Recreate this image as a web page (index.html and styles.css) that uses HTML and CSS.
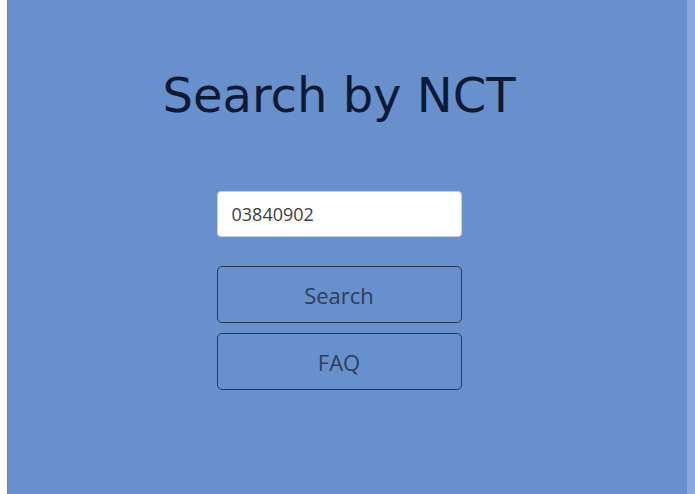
FILE: index.html
```html
<!DOCTYPE html>
<html>
<head>
<meta charset="utf-8">
<link rel="stylesheet" href="styles.css">
</head>
<body>
<div class="page">
  <main class="content">
    <h1 class="title">Search by NCT</h1>
    <form class="form">
      <input class="field" type="text" value="03840902">
      <button class="btn" type="button">Search</button>
      <button class="btn" type="button">FAQ</button>
    </form>
  </main>
  <div class="edge"></div>
</div>
</body>
</html>
```
FILE: styles.css
```css
html, body {
  margin: 0;
  padding: 0;
  background: #ffffff;
}
.page {
  display: flex;
  height: 494px;
  padding-left: 7px;
}
.content {
  width: 680px;
  background: #6890cd;
  display: flex;
  flex-direction: column;
  align-items: center;
  padding-right: 16px;
  box-sizing: border-box;
}
.edge {
  width: 8px;
  background: #8aa8dc;
}
.title {
  margin: 63px 0 0 0;
  font-family: "DejaVu Sans", sans-serif;
  font-weight: normal;
  font-size: 48px;
  line-height: 64px;
  color: #0e1a33;
  letter-spacing: 0px;
}
.form {
  margin-top: 64px;
  display: flex;
  flex-direction: column;
  width: 245px;
}
.field {
  height: 46px;
  box-sizing: border-box;
  border: 1px solid #c9ced6;
  border-radius: 4px;
  background: #ffffff;
  padding: 0 14px;
  font-family: "Open Sans", sans-serif;
  font-size: 18px;
  color: #3d3d3d;
  outline: none;
}
.btn {
  height: 57px;
  margin-top: 29px;
  box-sizing: border-box;
  border: 1.5px solid #2a3852;
  border-radius: 5px;
  background: transparent;
  font-family: "Open Sans", sans-serif;
  font-size: 22px;
  color: #2e3d59;
}
.btn + .btn {
  margin-top: 10px;
}
```
